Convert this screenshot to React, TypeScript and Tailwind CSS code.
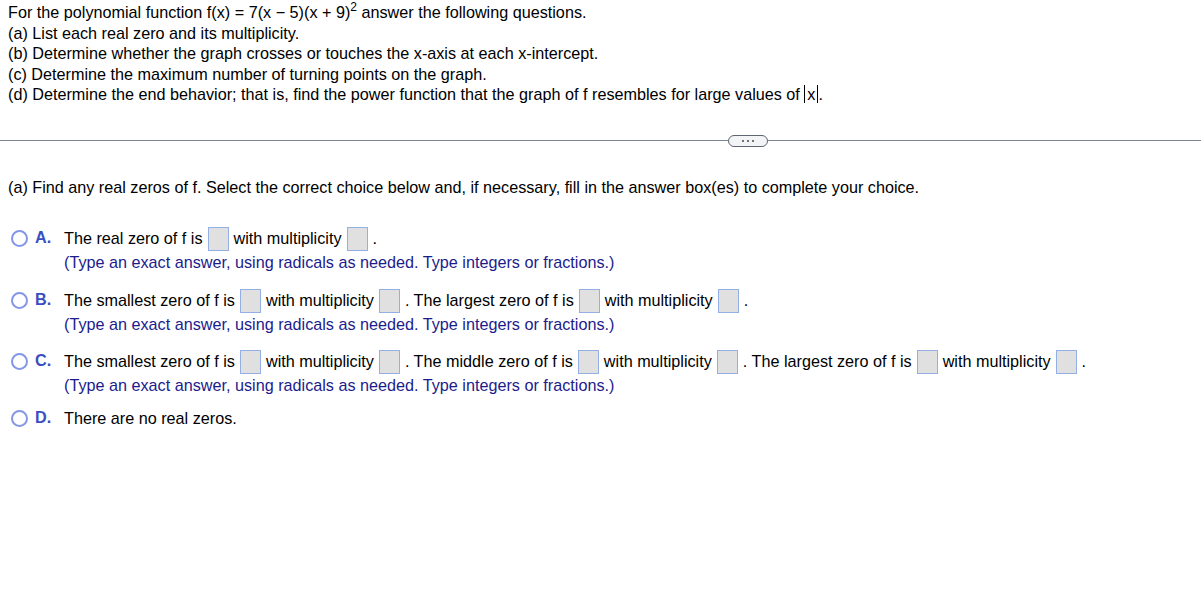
import React from "react";

function Box() {
  return <span className="inline-block w-[21px] h-[24px] bg-[#e0e0e0] border border-[#94aee6] mx-[5px] align-middle" />;
}

function Radio() {
  return <span className="inline-block w-[17px] h-[17px] rounded-full border-2 border-[#8496e6] bg-white" />;
}

const hint = "(Type an exact answer, using radicals as needed. Type integers or fractions.)";

function Option({ letter, lines, mt }: { letter: string; lines: React.ReactNode[]; mt: string }) {
  return (
    <div className={`flex ${mt}`}>
      <div className="flex items-center h-[24px] w-[64px] pl-[11px] shrink-0">
        <Radio />
        <span className="ml-[7px] font-bold text-[#3a4ec2] -mt-[3px]">{letter}</span>
      </div>
      <div className="flex flex-col">
        {lines.map((l, i) => (
          <div key={i} className="h-[24px] flex items-center whitespace-nowrap">
            {l}
          </div>
        ))}
      </div>
    </div>
  );
}

export default function App() {
  return (
    <div className="w-[1201px] h-[594px] bg-white text-[16.2px] text-black overflow-hidden" style={{ fontFamily: '"Liberation Sans", Arial, sans-serif' }}>
      <div className="pl-[8px] pt-[2px] leading-[20.5px]">
        <div>
          For the polynomial function f(x) = 7(x − 5)(x + 9)<sup className="text-[12px] relative -top-[7px]">2</sup> answer the following questions.
        </div>
        <div>(a) List each real zero and its multiplicity.</div>
        <div>(b) Determine whether the graph crosses or touches the x-axis at each x-intercept.</div>
        <div>(c) Determine the maximum number of turning points on the graph.</div>
        <div>
          (d) Determine the end behavior; that is, find the power function that the graph of f resembles for large values of{" "}
          <span className="inline-block border-l border-r border-black px-[2px] leading-[18px]">x</span>.
        </div>
      </div>

      <div className="flex items-center mt-[30px]">
        <div className="w-[728px] h-px bg-[#7d8696]" />
        <div className="w-[40px] h-[12px] rounded-full border border-[#5d6672] bg-[#f3f4f6] flex items-center justify-center gap-[3px]">
          <span className="w-[2px] h-[2px] bg-[#444] rounded-full" />
          <span className="w-[2px] h-[2px] bg-[#444] rounded-full" />
          <span className="w-[2px] h-[2px] bg-[#444] rounded-full" />
        </div>
        <div className="flex-1 h-px bg-[#7d8696]" />
      </div>

      <div className="pl-[8px] mt-[30px] leading-[20px]">
        (a) Find any real zeros of f. Select the correct choice below and, if necessary, fill in the answer box(es) to complete your choice.
      </div>

      <Option
        letter="A."
        mt="mt-[30px]"
        lines={[
          <>The real zero of f is<Box />with multiplicity<Box />.</>,
          <span className="text-[#1c1c8c]">{hint}</span>,
        ]}
      />
      <Option
        letter="B."
        mt="mt-[14px]"
        lines={[
          <>The smallest zero of f is<Box />with multiplicity<Box />. The largest zero of f is<Box />with multiplicity<Box />.</>,
          <span className="text-[#1c1c8c]">{hint}</span>,
        ]}
      />
      <Option
        letter="C."
        mt="mt-[13px]"
        lines={[
          <>The smallest zero of f is<Box />with multiplicity<Box />. The middle zero of f is<Box />with multiplicity<Box />. The largest zero of f is<Box />with multiplicity<Box />.</>,
          <span className="text-[#1c1c8c]">{hint}</span>,
        ]}
      />
      <Option letter="D." mt="mt-[9px]" lines={[<>There are no real zeros.</>]} />
    </div>
  );
}
